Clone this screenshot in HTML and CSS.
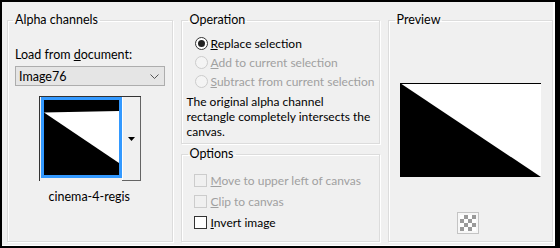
FILE: index.html
```html
<!DOCTYPE html>
<html lang="en">
<head>
    <meta charset="UTF-8">
    <title>Load Alpha Channel</title>
    <link rel="stylesheet" href="styles.css">
</head>
<body>
    <div class="dialog">
        <fieldset class="group group-alpha">
            <legend>Alpha channels</legend>
            <div class="field-label">Load from <u>d</u>ocument:</div>
            <div class="select">
                <span>Image76</span>
                <svg class="chevron" width="9" height="5" viewBox="0 0 9 5"><path d="M0.5 0.5 L4.5 4.5 L8.5 0.5" fill="none" stroke="#555" stroke-width="1"/></svg>
            </div>
            <div class="thumb-picker">
                <div class="thumb">
                    <svg width="75" height="75" viewBox="0 0 75 75">
                        <rect width="75" height="75" fill="#000"/>
                        <polygon points="0,12.5 75,11 75,63" fill="#fff"/>
                    </svg>
                </div>
                <div class="thumb-arrow">
                    <svg width="7" height="4" viewBox="0 0 7 4"><polygon points="0,0 7,0 3.5,4" fill="#000"/></svg>
                </div>
            </div>
            <div class="caption">cinema-4-regis</div>
        </fieldset>

        <div class="middle">
            <fieldset class="group group-op">
                <legend>Operation</legend>
                <div class="choice">
                    <span class="radio checked"></span>
                    <span><u>R</u>eplace selection</span>
                </div>
                <div class="choice disabled">
                    <span class="radio"></span>
                    <span><u>A</u>dd to current selection</span>
                </div>
                <div class="choice disabled">
                    <span class="radio"></span>
                    <span><u>S</u>ubtract from current selection</span>
                </div>
                <p class="note">The original alpha channel<br>rectangle completely intersects the<br>canvas.</p>
            </fieldset>

            <fieldset class="group group-opt">
                <legend>Options</legend>
                <div class="choice check-row disabled">
                    <span class="checkbox"></span>
                    <span><u>M</u>ove to upper left of canvas</span>
                </div>
                <div class="choice check-row disabled">
                    <span class="checkbox"></span>
                    <span><u>C</u>lip to canvas</span>
                </div>
                <div class="choice check-row">
                    <span class="checkbox"></span>
                    <span><u>I</u>nvert image</span>
                </div>
            </fieldset>
        </div>

        <fieldset class="group group-preview">
            <legend>Preview</legend>
            <div class="preview">
                <svg width="141" height="94" viewBox="0 0 141 94">
                    <rect width="141" height="94" fill="#fff"/>
                    <polygon points="0,0 141,94 0,94" fill="#000"/>
                    <rect width="141" height="1" fill="#000"/>
                </svg>
            </div>
            <div class="checker-btn">
                <div class="checker"></div>
            </div>
        </fieldset>
    </div>
</body>
</html>
```

FILE: styles.css
```css
body {
    margin: 0;
    font-family: Lato, "Liberation Sans", sans-serif;
    font-size: 12px;
    color: #000;
    background: #f0f0f0;
}

.dialog {
    box-sizing: border-box;
    width: 560px;
    height: 248px;
    display: flex;
    gap: 8px;
    padding: 10px 2px 4px 5px;
    border: 2px solid #000;
    border-right-width: 5px;
    background: #f0f0f0;
    box-shadow: inset -2px -1px 0 #fff;
}

.group {
    box-sizing: border-box;
    margin: 0;
    min-width: 0;
    border: 1px solid #dcdcdc;
    box-shadow: inset 1px 1px 0 #fff, 1px 1px 0 #fff;
}

.group legend {
    padding: 0 2px;
    line-height: 16px;
    font-size: 12.5px;
}

.group-alpha {
    width: 166px;
    padding: 0 6px 0 7px;
    display: flex;
    flex-direction: column;
}

.group-alpha legend {
    margin-left: -2px;
}

.field-label {
    margin-top: 19px;
    line-height: 16px;
    font-size: 12.5px;
}

.select {
    margin-top: 3px;
    box-sizing: border-box;
    width: 150px;
    height: 20px;
    display: flex;
    align-items: center;
    justify-content: space-between;
    padding: 0 5px 0 3px;
    border: 1px solid #adadad;
    background: #e5e5e5;
    font-size: 12.5px;
}

.thumb-picker {
    margin: 10px 0 0 24px;
    width: 102px;
    height: 85px;
    box-sizing: border-box;
    display: flex;
    border-top: 1px solid #333;
    border-left: 1px solid #333;
}

.thumb {
    margin: 0 0 2px 1px;
    border: 3px solid #3399ff;
    width: 75px;
    height: 75px;
}

.thumb svg {
    display: block;
}

.thumb-arrow {
    flex: 1;
    display: flex;
    justify-content: center;
    padding-top: 40px;
    border-right: 1px solid #646464;
    border-bottom: 1px solid #646464;
    box-shadow: inset 1px 0 0 #fff;
}

.thumb-arrow svg {
    display: block;
}

.caption {
    margin-top: 8px;
    line-height: 16px;
    text-align: center;
    padding-right: 2px;
    font-size: 12.5px;
}

.middle {
    width: 199px;
    display: flex;
    flex-direction: column;
    gap: 2px;
}

.group-op {
    height: 132px;
    padding: 0 4px 0 5px;
}

.group-op legend,
.group-opt legend {
    margin-left: 1px;
}

.group-opt {
    flex: 1;
    padding: 8px 4px 0 5px;
}

.choice {
    display: flex;
    align-items: center;
    gap: 3px;
    height: 19px;
    padding-left: 8px;
    white-space: nowrap;
}

.group-op .choice:first-of-type {
    margin-top: 6px;
}

.choice.disabled {
    color: #a0a0a0;
}

.check-row {
    height: 21px;
    gap: 4px;
    padding-left: 7px;
}

.radio {
    flex-shrink: 0;
    box-sizing: border-box;
    width: 13px;
    height: 13px;
    border-radius: 50%;
    border: 1px solid #333;
    background: #fff;
    display: flex;
    align-items: center;
    justify-content: center;
}

.radio.checked::after {
    content: "";
    width: 7px;
    height: 7px;
    border-radius: 50%;
    background: #222;
}

.disabled .radio {
    border-color: #cccccc;
    background: #f4f4f4;
}

.checkbox {
    flex-shrink: 0;
    box-sizing: border-box;
    width: 13px;
    height: 13px;
    border: 1px solid #333;
    background: #fff;
}

.disabled .checkbox {
    border-color: #cccccc;
    background: transparent;
}

.note {
    margin: 3px 0 0;
    line-height: 15px;
    white-space: nowrap;
}

.group-preview {
    width: 166px;
    padding: 0;
    display: flex;
    flex-direction: column;
    align-items: center;
}

.group-preview legend {
    margin-left: 6px;
}

.preview {
    margin-top: 55px;
}

.preview svg {
    display: block;
}

.checker-btn {
    margin: 35px 5px 0 0;
    box-sizing: border-box;
    width: 22px;
    height: 22px;
    padding: 2px;
    border: 1px solid #c4c4c4;
    background: #f7f7f7;
}

.checker {
    width: 16px;
    height: 16px;
    background-color: #fff;
    background-image:
        linear-gradient(45deg, #9a9a9a 25%, transparent 25%, transparent 75%, #9a9a9a 75%),
        linear-gradient(45deg, #9a9a9a 25%, transparent 25%, transparent 75%, #9a9a9a 75%);
    background-size: 8px 8px;
    background-position: 0 0, 4px 4px;
}
```
